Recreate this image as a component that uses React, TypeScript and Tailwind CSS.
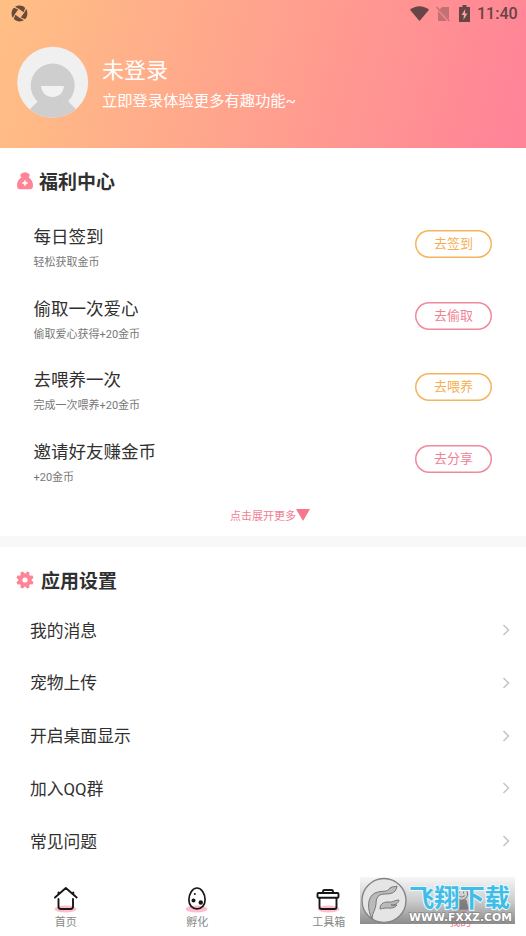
import { ReactNode } from 'react';

const tasks = [
  { title: '每日签到', hint: '轻松获取金币', action: '去签到', gold: true },
  { title: '偷取一次爱心', hint: '偷取爱心获得+20金币', action: '去偷取', gold: false },
  { title: '去喂养一次', hint: '完成一次喂养+20金币', action: '去喂养', gold: true },
  { title: '邀请好友赚金币', hint: '+20金币', action: '去分享', gold: false },
];

const settings = ['我的消息', '宠物上传', '开启桌面显示', '加入QQ群', '常见问题'];

const StatusBar = () => (
  <div className="flex h-[27px] items-center pl-[11px] pr-[9px] text-[#674445]">
    <svg width="17" height="17" viewBox="0 0 17 17" fill="#684b38">
      {[0, 90, 180, 270].map((angle) => (
        <path
          key={angle}
          d="M4 1.700C7.500 0 11.500 .2 14.200 2.900L12.600 7.200 8.500 4.300Z"
          transform={`rotate(${angle} 8.5 8.5)`}
        />
      ))}
    </svg>
    <div className="ml-auto flex items-center">
      <svg width="19" height="15" viewBox="0 0 19 15" fill="currentColor">
        <path d="M0 3.8C5.5-1 13.5-1 19 3.8L9.5 15Z" />
      </svg>
      <svg className="ml-[7px]" width="14" height="16" viewBox="0 0 14 16" opacity=".4">
        <path d="M2 5v10h9L2 5ZM4 3l2-2h7v12L4 4Z" fill="currentColor" />
        <path d="m.5 1 13 14" stroke="currentColor" strokeWidth="1.3" />
      </svg>
      <svg className="ml-[9px]" width="11" height="17" viewBox="0 0 11 17">
        <path d="M3.500 0h4v2H11v15H0V2h3.500Z" fill="currentColor" />
        <path d="M6.300 4 2.500 10h2.400L4.400 15 8.500 8.500H6Z" fill="#ffa09a" />
      </svg>
      <span className="ml-[7px] w-[40px] whitespace-nowrap font-[Roboto] text-[16px] font-medium leading-5">11:40</span>
    </div>
  </div>
);

const Avatar = () => (
  <svg width="72" height="72" viewBox="0 0 72 72" className="shrink-0">
    <defs>
      <clipPath id="face">
        <circle cx="35.700" cy="36.300" r="35.500" />
      </clipPath>
    </defs>
    <g clipPath="url(#face)">
      <path d="M0 0h72v72H0Z" fill="#f0f0f0" />
      <circle cx="35.700" cy="39.500" r="22" fill="#cecece" />
      <path d="M13 64c2-5 8-6 8-11h30c0 5 6 6 8 11v8H13Z" fill="#cecece" />
      <path d="M24 40h23c-1 7-5 11-11.500 11S25 47 24 40Z" fill="#f2f2f2" />
    </g>
  </svg>
);

const BagIcon = () => (
  <svg width="16" height="18" viewBox="0 0 16 18">
    <path
      d="M4.300 5.500C3.300 4 2.800 2.500 4.300 1.500 5.500 1.600 6 .3 8 .3s2.500 1.300 3.700 1.200c1.500 1 1 2.500 0 4 2.700 1.500 4.300 4.500 4.300 7.500 0 3.200-1 4.200-3 4.200H3c-2 0-3-1-3-4.200 0-3 1.600-6 4.300-7.500Z"
      fill="#ff8496"
    />
    <path d="m8 8 .9 2.100L11 11l-2.100.9L8 14l-.9-2.100L5 11l2.100-.9Z" fill="#fff" stroke="#fff" strokeWidth=".4" />
  </svg>
);

const GearIcon = () => (
  <svg width="18" height="18" viewBox="0 0 18 18">
    {[0, 45, 90, 135].map((angle) => (
      <path
        key={angle}
        d="M7.700 .3h2.600L11.500 4v10l-1.200 3.700H7.700L6.500 14V4Z"
        fill="#ff8496"
        transform={`rotate(${angle + 22.5} 9 9)`}
      />
    ))}
    <circle cx="9" cy="9" r="6.400" fill="#ff8496" />
    <circle cx="9" cy="9" r="2.600" fill="#fff" />
  </svg>
);

const TabIcon = ({ children }: { children: ReactNode }) => (
  <svg width="30" height="29" viewBox="0 0 30 29" fill="none" stroke="#171717" strokeWidth="1.900" strokeLinecap="round" strokeLinejoin="round">
    <ellipse cx="14.500" cy="25" rx="11" ry="3.500" fill="#ffbdcb" stroke="none" />
    {children}
  </svg>
);

const tabs = [
  {
    label: '首页',
    icon: <path d="M4 13.500 14.800 4l10.900 9.500M7.500 15v7.500q0 2.500 2.500 2.500h9.500q2.500 0 2.500-2.500V15M7.500 10V8.500M22.300 10V8.500" />,
  },
  {
    label: '孵化',
    icon: (
      <>
        <path d="M15 4c-4.600 0-8.100 6-8.100 11.700 0 5.500 3.500 9.100 8.100 9.100s8.100-3.600 8.100-9.100C23.100 10 19.600 4 15 4Z" strokeWidth="1.700" />
        <g fill="#171717" stroke="none">
          <circle cx="12.800" cy="10" r="1" />
          <circle cx="11.500" cy="16.500" r="2" />
          <circle cx="18.800" cy="18.500" r="2.200" />
        </g>
      </>
    ),
  },
  {
    label: '工具箱',
    icon: (
      <>
        <path d="M5.500 14v9q0 2 2 2h13q2 0 2-2v-9M9 9V7.500Q9 6 10.500 6h7Q19 6 19 7.500V9" />
        <rect x="3.500" y="9" width="21" height="4.700" rx="1" />
      </>
    ),
  },
  {
    label: '我的',
    icon: (
      <>
        <path d="M12 16h9l2 9H10Z" fill="#333" stroke="#333" strokeWidth="1" />
        <circle cx="16.500" cy="10" r="6.200" fill="#eee" strokeWidth="1" />
        <path d="M14.500 8v1M18.500 8v1M13.500 12q3 2.500 6 0" strokeWidth="1" />
      </>
    ),
  },
];

const Watermark = () => (
  <div className="absolute left-[360px] top-[877px] h-[47px] w-[155px] bg-linear-to-b from-[#eeeeee80] via-[#b0b0b0a0] to-[#777777d8]">
    <svg width="155" height="47" viewBox="0 0 155 47">
      <circle cx="24" cy="23.500" r="22" fill="#e5e5e5" stroke="#858585" strokeWidth="1.400" />
      <g fill="#bababa" stroke="#777" strokeWidth="1">
        <path d="M12 42C7 32 7 20 15 16c7-3 12 0 15-5 3-2 5-1 7-2-1 6-4 8-12 8-7 0-9 4-9 10 0 5-4 9-4 15Z" />
        <path d="M20 32c0-5 3-7 8-7 5 1 6-2 11-2-1 4-4 5-8 5 2 1 4 0 6 0-3 4-8 3-11 3-3 0-4 1-6 1Z" />
      </g>
      <text
        x="49"
        y="29.500"
        textLength="101"
        lengthAdjust="spacingAndGlyphs"
        fill="#42bce7"
        stroke="#e7faff"
        strokeWidth="2"
        paintOrder="stroke"
        className="font-['Noto_Sans_CJK_SC',sans-serif] text-[25px] font-bold"
      >
        飞翔下载
      </text>
      <text
        x="49"
        y="43.500"
        textLength="103"
        lengthAdjust="spacingAndGlyphs"
        fill="#fff"
        stroke="#777"
        strokeWidth="1.200"
        paintOrder="stroke"
        className="font-['DejaVu_Sans',sans-serif] text-[11px] font-bold"
      >
        WWW.FXXZ.COM
      </text>
    </svg>
  </div>
);

export default function App() {
  return (
    <div className="relative h-[936px] w-[526px] overflow-hidden bg-white font-[Roboto,'Noto_Sans_CJK_SC',sans-serif] text-[#303030]">
      <header className="h-[148px] bg-[linear-gradient(105deg,#ffc084_0%,#ff8497_97%)]">
        <StatusBar />
        <div className="flex pl-[17px] pt-[19px]">
          <Avatar />
          <div className="ml-[13px] pt-[11px] text-white">
            <h1 className="text-[22px] leading-[28px]">未登录</h1>
            <p className="mt-[4px] text-[15.300px] leading-6">立即登录体验更多有趣功能~</p>
          </div>
        </div>
      </header>
      <section className="h-[388px] pt-[18px]">
        <h2 className="flex h-[30px] items-center gap-[6px] pl-[17px] text-[19px] font-bold">
          <BagIcon />
          <span className="pt-[5px]">福利中心</span>
        </h2>
        <div className="pt-[12px]">
          {tasks.map(({ title, hint, action, gold }) => (
            <div key={title} className="flex h-[71.700px] items-center justify-between pl-[33.500px] pr-[34px]">
              <div className="pt-[10px]">
                <h3 className="text-[17.500px] leading-[27px]">{title}</h3>
                <p className="mt-[1px] text-[11px] leading-[22px] text-[#777]">{hint}</p>
              </div>
              <button
                className={`h-[28px] w-[77px] rounded-full text-[13px] ${
                  gold
                    ? 'text-[#f5af50] shadow-[inset_0_0_0_1.5px_#f5b45b]'
                    : 'text-[#f18295] shadow-[inset_0_0_0_1.5px_#f0899c]'
                }`}
              >
                {action}
              </button>
            </div>
          ))}
        </div>
        <button className="ml-[230px] mt-[8px] flex h-6 items-center text-[11px] text-[#f27e92]">
          <span className="pt-[4px]">点击展开更多</span>
          <svg width="14" height="12" viewBox="0 0 14 12">
            <path d="M0 0h14L7 12Z" fill="#f7768b" />
          </svg>
        </button>
      </section>
      <div className="h-[11px] bg-[#f8f8f8]" />
      <section className="pt-[18px]">
        <h2 className="flex h-[30px] items-center gap-[7px] pl-[16px] text-[19px] font-bold">
          <GearIcon />
          <span className="pt-[5px]">应用设置</span>
        </h2>
        <div className="pt-[9px]">
          {settings.map((name) => (
            <div key={name} className="flex h-[52.700px] items-center justify-between pl-[30px] pr-[16px] text-[16.800px]">
              <span className="pt-[2px]">{name}</span>
              <svg width="8" height="12" viewBox="0 0 8 12" fill="none" stroke="#c4c4c4" strokeWidth="1.500">
                <path d="m1.500 1 5 5-5 5" />
              </svg>
            </div>
          ))}
        </div>
      </section>
      <nav className="absolute inset-x-0 bottom-0 flex h-[52px] bg-white">
        {tabs.map(({ label, icon }) => (
          <div key={label} className="flex flex-1 flex-col items-center">
            <TabIcon>{icon}</TabIcon>
            <span className={`text-[11px] leading-[20px] ${label === '我的' ? 'text-[#ef7891]' : 'text-[#888]'}`}>{label}</span>
          </div>
        ))}
      </nav>
      <Watermark />
    </div>
  );
}
